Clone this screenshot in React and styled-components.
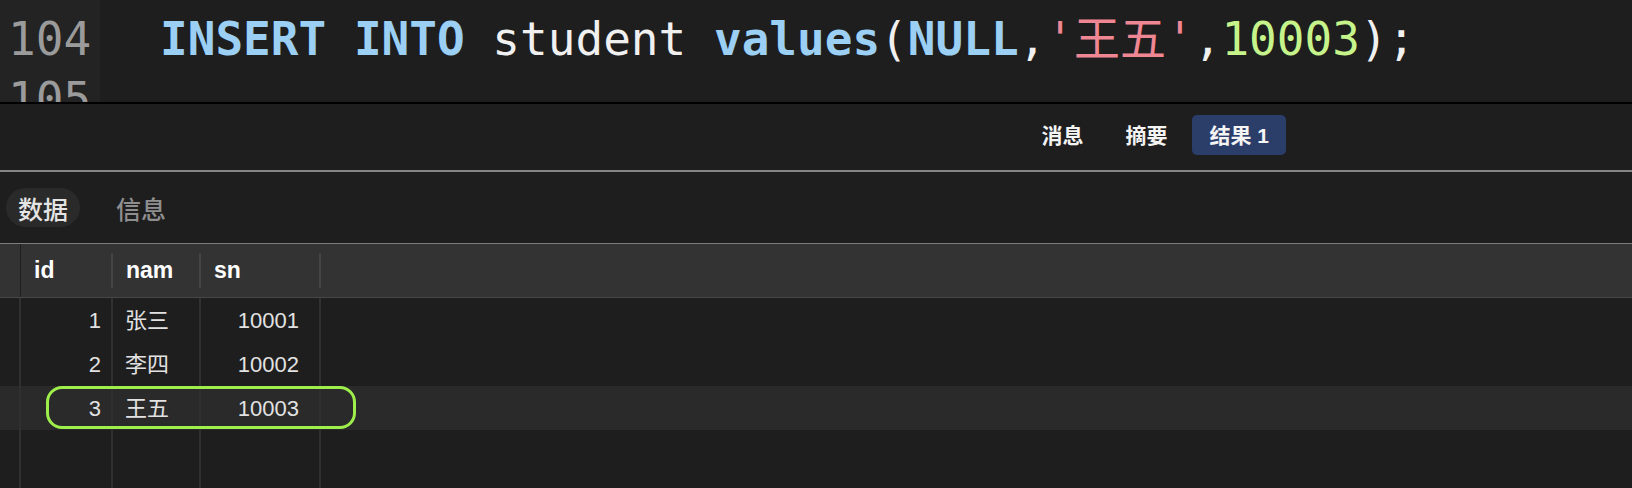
import React from "react";
import styled, { createGlobalStyle } from "styled-components";

const GlobalStyle = createGlobalStyle`
  * { box-sizing: border-box; }
  html, body {
    margin: 0;
    padding: 0;
    background: #1e1e1e;
  }
`;

const uiFont = `"Liberation Sans", "Noto Sans CJK SC", sans-serif`;
const monoFont = `"DejaVu Sans Mono", "Noto Sans CJK SC", monospace`;
const cols = "21px 92px 88px 120px 1fr";

const rows = [
  { id: 1, name: "张三", sn: 10001 },
  { id: 2, name: "李四", sn: 10002 },
  { id: 3, name: "王五", sn: 10003, active: true },
];

export default function App() {
  return (
    <>
      <GlobalStyle />
      <Page>
        <Editor>
          <Gutter>
            <div>104</div>
            <div>105</div>
          </Gutter>
          <Code>
            <Line>
              <Tok kind="kw">INSERT</Tok> <Tok kind="kw">INTO</Tok>{" "}
              <Tok>student</Tok> <Tok kind="kw">values</Tok>
              <Tok>(</Tok>
              <Tok kind="kw">NULL</Tok>
              <Tok>,</Tok>
              <Tok kind="str">'王五'</Tok>
              <Tok>,</Tok>
              <Tok kind="num">10003</Tok>
              <Tok>);</Tok>
            </Line>
            <Line />
          </Code>
        </Editor>

        <TabBar>
          <Tab>消息</Tab>
          <Tab>摘要</Tab>
          <Tab active>结果 1</Tab>
        </TabBar>

        <SubTabs>
          <SubTab active>数据</SubTab>
          <SubTab>信息</SubTab>
        </SubTabs>

        <Grid>
          <HeadRow>
            <HeadCell />
            <HeadCell sep>id</HeadCell>
            <HeadCell sep>nam</HeadCell>
            <HeadCell sep>sn</HeadCell>
            <HeadCell />
          </HeadRow>
          <Body>
            {rows.map((r) => (
              <Row key={r.id} active={r.active}>
                <Cell />
                <Cell align="right">{r.id}</Cell>
                <Cell>{r.name}</Cell>
                <Cell align="right" pad={20}>{r.sn}</Cell>
                <Cell last />
              </Row>
            ))}
            <Filler>
              <Cell />
              <Cell />
              <Cell />
              <Cell />
              <Cell last />
            </Filler>
            <Mark />
          </Body>
        </Grid>
      </Page>
    </>
  );
}

const Page = styled.div`
  width: 1632px;
  height: 488px;
  display: flex;
  flex-direction: column;
  overflow: hidden;
  background: #1e1e1e;
`;

const Editor = styled.div`
  display: flex;
  height: 104px;
  flex-shrink: 0;
  overflow: hidden;
  border-bottom: 2px solid #000;
  font-family: ${monoFont};
  font-size: 46px;
  line-height: 60px;
`;

const Gutter = styled.div`
  width: 100px;
  flex-shrink: 0;
  padding: 9px 0 0 8px;
  background: #232323;
  color: #9b9b9b;
`;

const Code = styled.div`
  flex: 1;
  padding: 9px 0 0 60px;
  background: #1e1e1e;
  white-space: pre;
`;

const Line = styled.div`
  height: 60px;
`;

const tokColors = {
  kw: "#9bcff3",
  str: "#ef8694",
  num: "#c6f48b",
};

const Tok = styled.span`
  color: ${(p) => tokColors[p.kind] || "#f0f0f0"};
  font-weight: ${(p) => (p.kind === "kw" ? "bold" : "normal")};
`;

const TabBar = styled.div`
  height: 68px;
  flex-shrink: 0;
  display: flex;
  align-items: center;
  justify-content: flex-end;
  gap: 8px;
  padding: 0 346px 4px 0;
  border-bottom: 2px solid #858585;
`;

const Tab = styled.div`
  height: 40px;
  padding: 0 17px;
  display: flex;
  align-items: center;
  border-radius: 5px;
  font-family: ${uiFont};
  font-size: 21px;
  font-weight: 600;
  line-height: 1;
  color: #f4f4f4;
  background: ${(p) => (p.active ? "#2b3e6a" : "transparent")};
`;

const SubTabs = styled.div`
  height: 71px;
  flex-shrink: 0;
  display: flex;
  align-items: center;
  gap: 24px;
  padding-left: 6px;
`;

const SubTab = styled.div`
  height: 39px;
  padding: 5px 12px 0;
  display: flex;
  align-items: center;
  border-radius: 20px;
  font-family: ${uiFont};
  font-size: 25px;
  font-weight: 500;
  line-height: 1;
  color: ${(p) => (p.active ? "#e4e4e4" : "#8e8e8e")};
  background: ${(p) => (p.active ? "#2a2a2a" : "transparent")};
`;

const Grid = styled.div`
  flex: 1;
  display: flex;
  flex-direction: column;
  font-family: ${uiFont};
`;

const HeadRow = styled.div`
  display: grid;
  grid-template-columns: ${cols};
  height: 55px;
  flex-shrink: 0;
  background: #333333;
  border-top: 1px solid #7c7c7c;
  border-bottom: 1px solid #474747;

  & > :first-child {
    border-right: 1px solid #1f1f1f;
  }
`;

const HeadCell = styled.div`
  position: relative;
  display: flex;
  align-items: center;
  padding-left: 13px;
  font-size: 23px;
  font-weight: bold;
  color: #ffffff;

  &::after {
    content: "";
    display: ${(p) => (p.sep ? "block" : "none")};
    position: absolute;
    right: 0;
    top: 9px;
    bottom: 9px;
    width: 2px;
    background: #444444;
  }
`;

const Body = styled.div`
  position: relative;
  flex: 1;
  display: flex;
  flex-direction: column;
`;

const Row = styled.div`
  display: grid;
  grid-template-columns: ${cols};
  height: 44px;
  flex-shrink: 0;
  background: ${(p) => (p.active ? "#2a2a2a" : "transparent")};
`;

const Filler = styled(Row)`
  flex: 1;
  height: auto;
`;

const Cell = styled.div`
  display: flex;
  align-items: center;
  justify-content: ${(p) => (p.align === "right" ? "flex-end" : "flex-start")};
  padding: ${(p) => (p.align === "right" ? `2px ${p.pad || 10}px 0 0` : "2px 0 0 12px")};
  border-right: ${(p) => (p.last ? "none" : "2px solid #303030")};
  font-size: 22px;
  line-height: 1;
  color: #e2e2e2;
`;

const Mark = styled.div`
  position: absolute;
  left: 46px;
  top: 88px;
  width: 310px;
  height: 43px;
  border: 3px solid #9fef4c;
  border-radius: 16px;
  pointer-events: none;
`;
